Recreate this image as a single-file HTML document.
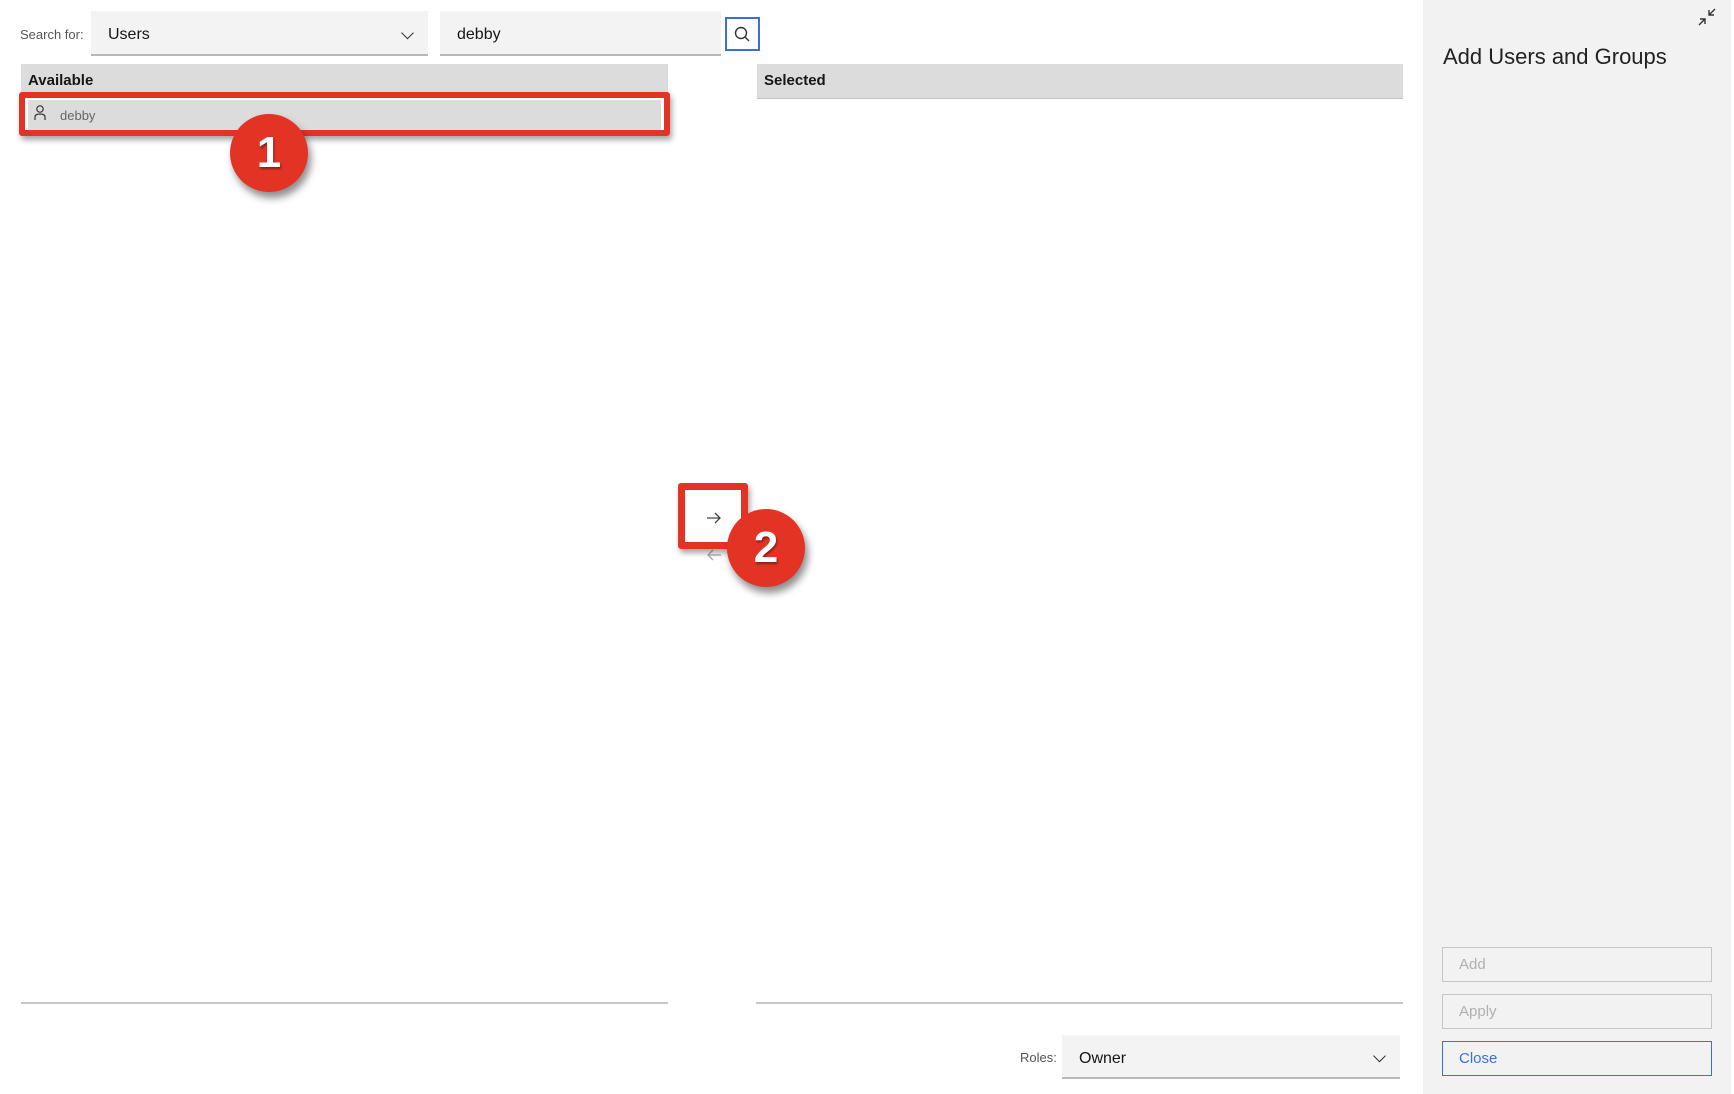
<!DOCTYPE html>
<html><head><meta charset="utf-8"><style>
*{box-sizing:border-box;margin:0;padding:0}
body{width:1734px;height:1094px;position:relative;background:#fff;font-family:"Liberation Sans",sans-serif;overflow:hidden;color:#161616}
.a{position:absolute}
.field{background:#f3f3f3;border-bottom:2px solid #b8b8b8;font-size:16px;padding:5px 0 0 17px;display:flex;align-items:center}
.hdr{background:#dcdcdc;border-bottom:1px solid #c4c4c4;font-weight:bold;font-size:15px;padding:8px 0 0 7px}
.chev{position:absolute;right:16px;top:50%;width:9px;height:9px;border-right:1.5px solid #333;border-bottom:1.5px solid #333;transform:translateY(-50%) rotate(45deg)}
.circ{border-radius:50%;background:#e33324;color:#fff;font-weight:bold;font-size:44px;display:flex;align-items:center;justify-content:center;box-shadow:3px 6px 8px rgba(0,0,0,.45);text-shadow:1px 2px 2px rgba(0,0,0,.4)}
.btn{border:1.5px solid #c6c6c6;font-size:15px;color:#b0b0b0;padding-left:16px;display:flex;align-items:center}
</style></head><body>
<div class="a" style="left:20px;top:27px;font-size:13px;color:#555">Search for:</div>
<div class="a field" style="left:91px;top:11px;width:337px;height:45px">Users<span class="chev"></span></div>
<div class="a field" style="left:440px;top:11px;width:281px;height:45px">debby</div>
<div class="a" style="left:725px;top:17px;width:35px;height:34px;border:2px solid #3b6fe0">
<svg width="31" height="30" viewBox="0 0 31 30"><circle cx="14" cy="14" r="5.5" fill="none" stroke="#333" stroke-width="1.4"/><line x1="18" y1="18" x2="22" y2="22" stroke="#333" stroke-width="1.4"/></svg></div>
<div class="a hdr" style="left:21px;top:64px;width:647px;height:34px">Available</div>
<div class="a" style="left:28px;top:100px;width:633px;height:30px;background:#dcdcdc;font-size:13px;color:#666;padding:8px 0 0 32px">debby</div>
<svg class="a" style="left:33px;top:104px" width="14" height="18" viewBox="0 0 14 18"><circle cx="7" cy="5" r="3.2" fill="none" stroke="#333" stroke-width="1.2"/><path d="M2 16 V13 Q2 10 7 10 Q12 10 12 13 V16" fill="none" stroke="#333" stroke-width="1.2"/></svg>
<div class="a" style="left:19px;top:92px;width:651px;height:44px;border:6px solid #e33324;border-radius:3px;box-shadow:2px 4px 6px rgba(0,0,0,.35)"></div>
<div class="a circ" style="left:230px;top:114px;width:78px;height:78px">1</div>
<div class="a hdr" style="left:757px;top:64px;width:646px;height:35px">Selected</div>
<div class="a" style="left:21px;top:1002px;width:647px;height:2px;background:#c8c8c8"></div>
<div class="a" style="left:756px;top:1002px;width:647px;height:2px;background:#c8c8c8"></div>
<svg class="a" style="left:706px;top:549px" width="16" height="12" viewBox="0 0 16 12"><path d="M15 6 H2 M7 1 L2 6 L7 11" fill="none" stroke="#aaa" stroke-width="1.3"/></svg>
<div class="a" style="left:678px;top:483px;width:70px;height:66px;border:7px solid #e33324;border-radius:3px;box-shadow:2px 4px 6px rgba(0,0,0,.35)"></div>
<svg class="a" style="left:706px;top:512px" width="16" height="12" viewBox="0 0 16 12"><path d="M1 6 H14 M9 1 L14 6 L9 11" fill="none" stroke="#444" stroke-width="1.3"/></svg>
<div class="a circ" style="left:727px;top:509px;width:78px;height:78px">2</div>
<div class="a" style="left:1020px;top:1050px;font-size:13px;color:#555">Roles:</div>
<div class="a field" style="left:1062px;top:1035px;width:338px;height:44px">Owner<span class="chev"></span></div>
<div class="a" style="left:1423px;top:0;width:308px;height:1094px;background:#f2f2f2"></div>
<svg class="a" style="left:1696px;top:6px" width="22" height="22" viewBox="0 0 22 22"><path d="M19 3 L13 9 M13 4 V9 H18 M3 19 L9 13 M4 13 H9 V18" fill="none" stroke="#333" stroke-width="1.4"/></svg>
<div class="a" style="left:1443px;top:44px;font-size:22px;color:#222">Add Users and Groups</div>
<div class="a btn" style="left:1442px;top:947px;width:270px;height:35px">Add</div>
<div class="a btn" style="left:1442px;top:994px;width:270px;height:35px">Apply</div>
<div class="a btn" style="left:1442px;top:1041px;width:270px;height:35px;border-color:#3b6fe0;color:#3b6fe0">Close</div>
</body></html>
